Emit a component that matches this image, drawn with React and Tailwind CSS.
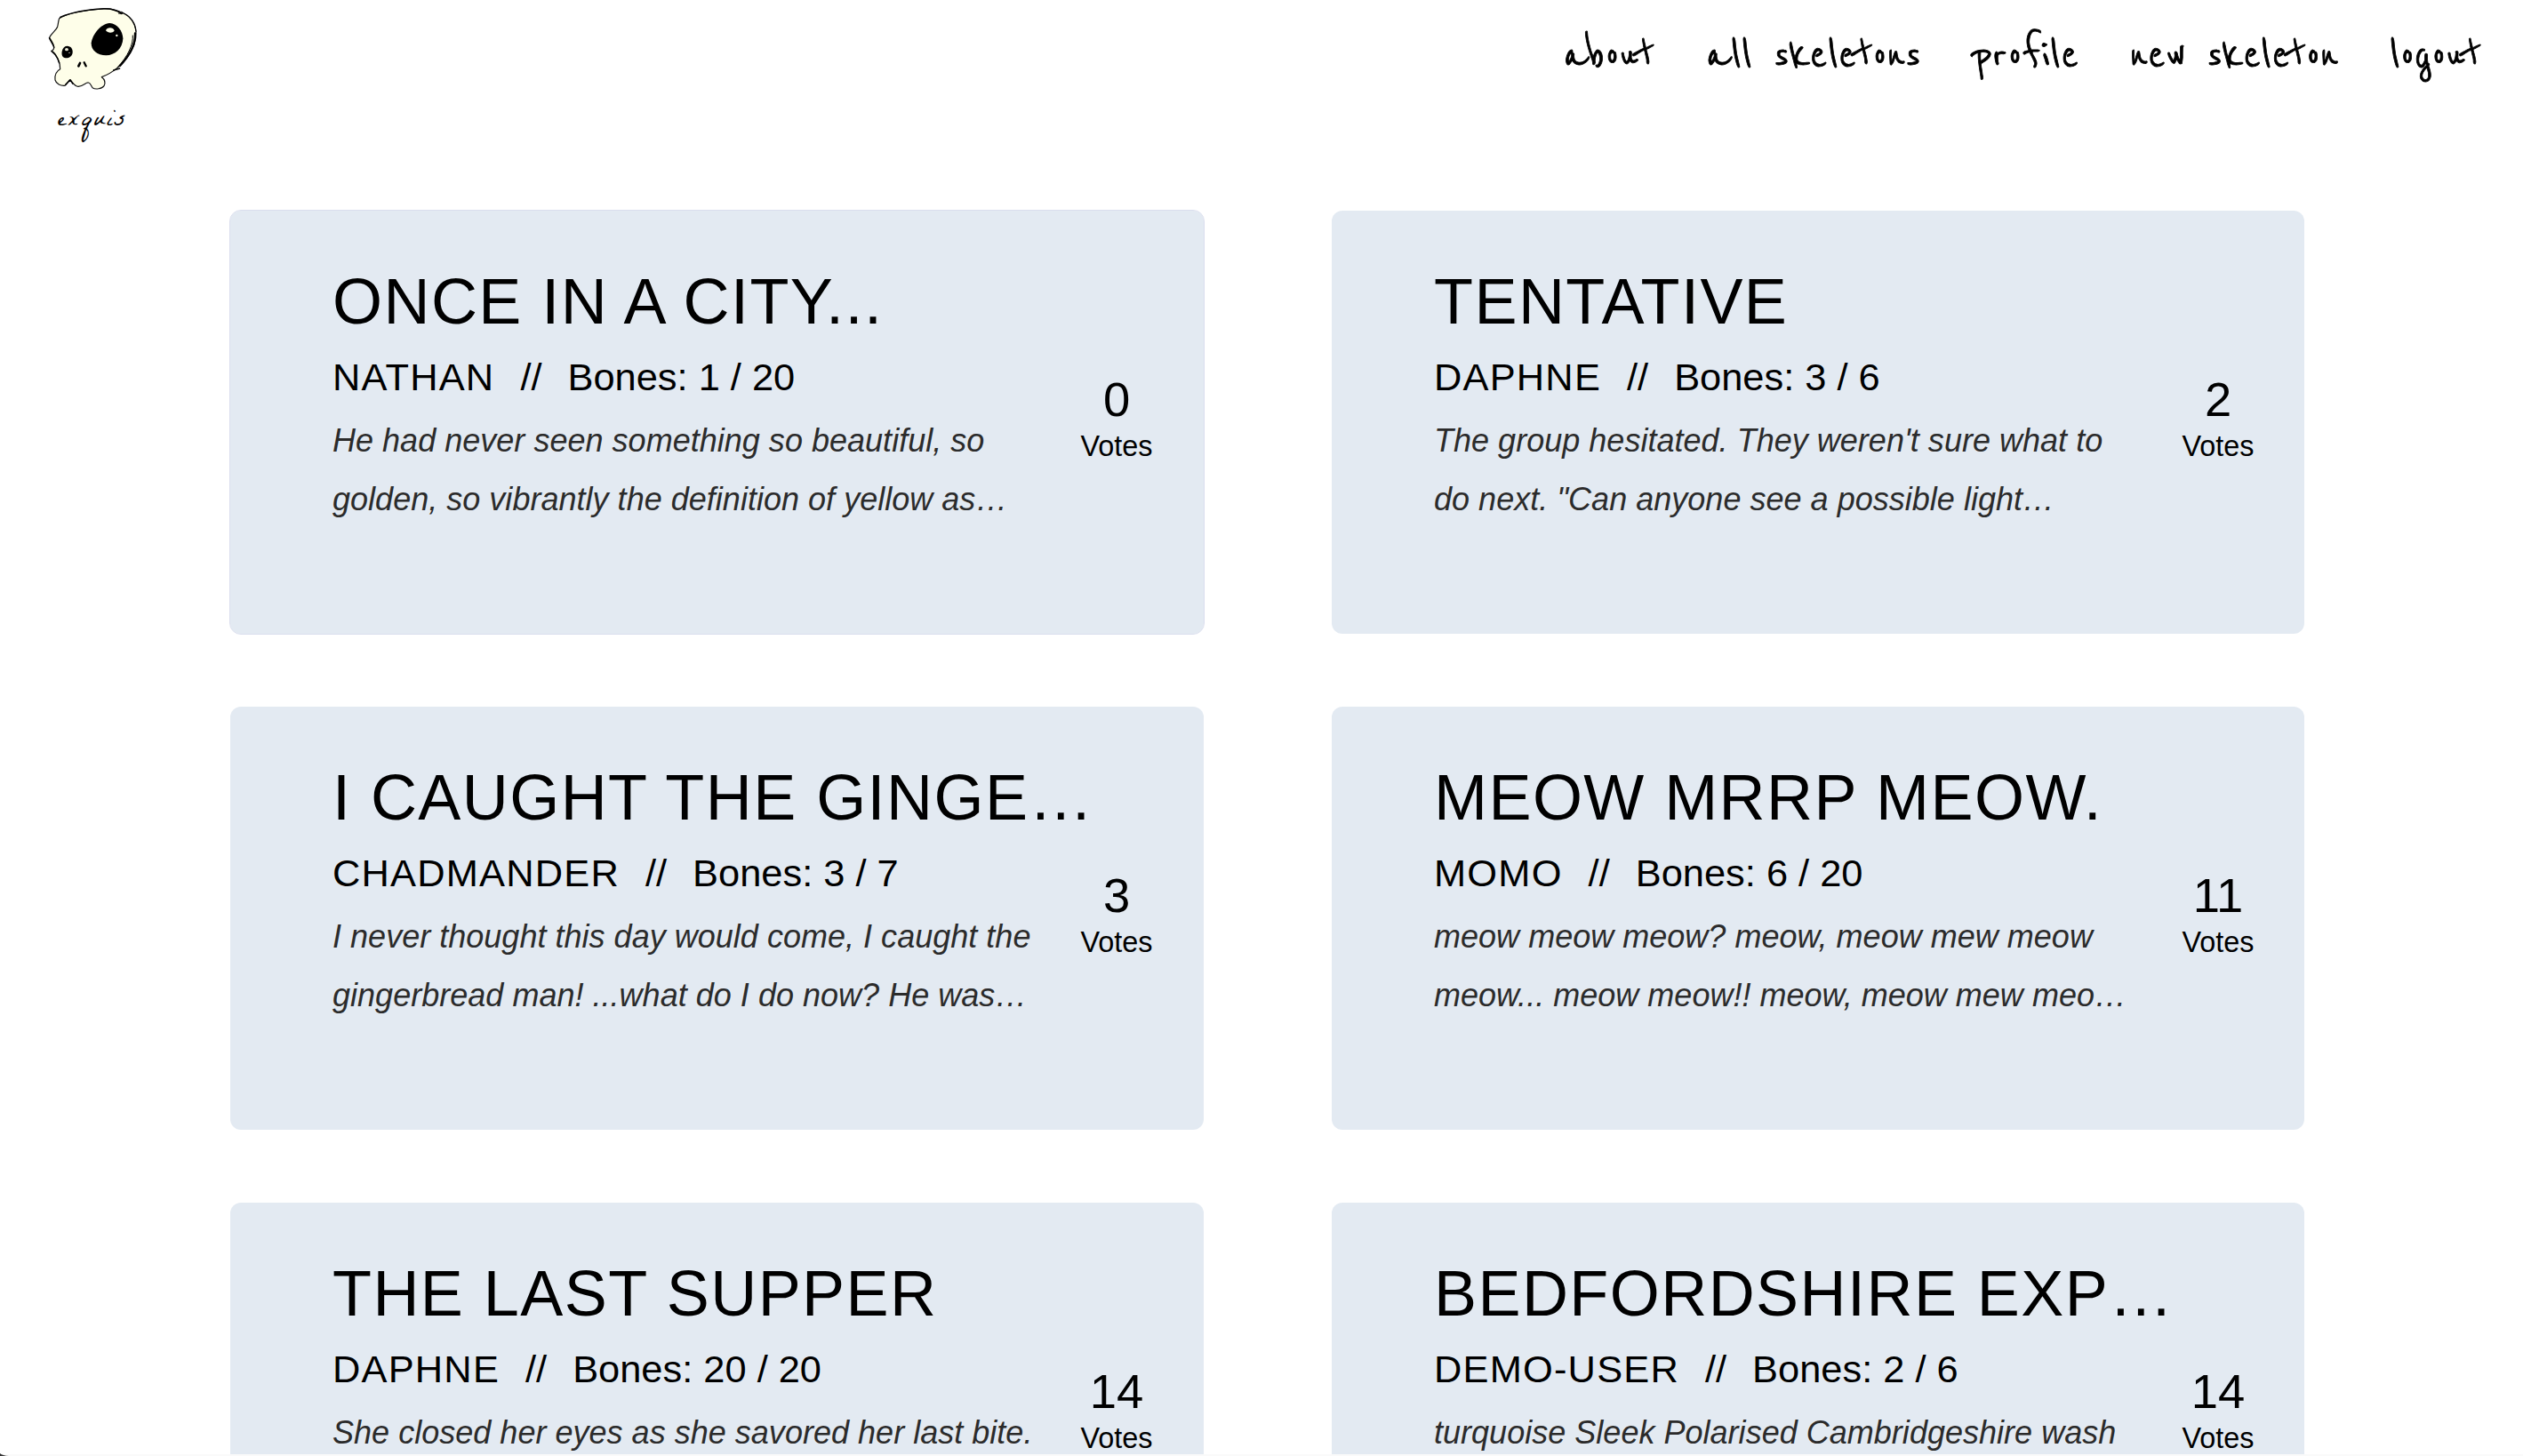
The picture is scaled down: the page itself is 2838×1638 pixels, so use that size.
import React from "react";

const navItems = ["about", "all skeletons", "profile", "new skeleton", "logout"];

const skeletons = [
  {
    title: "ONCE IN A CITY...",
    author: "NATHAN",
    bones: "1 / 20",
    lines: ["He had never seen something so beautiful, so", "golden, so vibrantly the definition of yellow as…"],
    votes: 0,
    active: true,
  },
  {
    title: "TENTATIVE",
    author: "DAPHNE",
    bones: "3 / 6",
    lines: ["The group hesitated. They weren't sure what to", 'do next. "Can anyone see a possible light…'],
    votes: 2,
  },
  {
    title: "I CAUGHT THE GINGE…",
    author: "CHADMANDER",
    bones: "3 / 7",
    lines: ["I never thought this day would come, I caught the", "gingerbread man! ...what do I do now? He was…"],
    votes: 3,
  },
  {
    title: "MEOW MRRP MEOW.",
    author: "MOMO",
    bones: "6 / 20",
    lines: ["meow meow meow? meow, meow mew meow", "meow... meow meow!! meow, meow mew meo…"],
    votes: 11,
  },
  {
    title: "THE LAST SUPPER",
    author: "DAPHNE",
    bones: "20 / 20",
    lines: ["She closed her eyes as she savored her last bite."],
    votes: 14,
  },
  {
    title: "BEDFORDSHIRE EXP…",
    author: "DEMO-USER",
    bones: "2 / 6",
    lines: ["turquoise Sleek Polarised Cambridgeshire wash"],
    votes: 14,
  },
];

function Skull() {
  return (
    <svg viewBox="150 21 330 285" className="h-[95px] w-[110px]" fill="none" strokeLinecap="round" strokeLinejoin="round">
      <path
        d="M200 62 C226 45 290 34 350 30 C382 28 402 38 421 47 C441 56 457 78 459 106 C461 140 447 172 427 197 C409 218 385 245 343 260 C354 268 357 278 351 290 C344 300 322 303 312 296 C306 287 305 280 299 279 C289 277 284 290 264 292 C252 291 244 277 237 269 C230 270 227 286 218 289 C205 290 190 284 186 270 C184 254 190 240 203 233 C203 214 196 190 174 173 C180 168 184 164 182 158 C176 146 170 138 166 128 C172 114 190 102 194 90 C197 80 196 72 200 62 Z"
        fill="#fefee9"
        stroke="#111"
        strokeWidth="3.5"
      />
      <path d="M203 58 C240 42 300 32 350 29 C378 28 396 36 410 46" stroke="#000" strokeWidth="4.5" />
      <path d="M400 45 L413 46 M410 40 C436 52 456 76 459 106" stroke="#000" strokeWidth="3" />
      <path d="M456 112 C458 150 440 184 405 222" stroke="#000" strokeWidth="7" />
      <path d="M448 120 C450 150 432 190 396 228" stroke="#000" strokeWidth="3" />
      <path d="M383 237 L404 231" stroke="#000" strokeWidth="4" />
      <path d="M167 128 C176 142 182 152 182 160 M174 172 C184 176 194 194 200 212" stroke="#000" strokeWidth="4.5" />
      <path d="M221 286 L237 270 L246 283" stroke="#000" strokeWidth="4.5" />
      <path
        d="M370 78 C396 80 414 104 415 130 C414 164 388 187 358 187 C328 187 307 170 308 145 C312 116 340 80 370 78 Z"
        fill="#000"
      />
      <path d="M357 103 C360 92 382 90 386 104 C380 112 364 112 357 103 Z" fill="#fefee9" />
      <circle cx="394" cy="120" r="3.5" fill="#fefee9" />
      <path d="M226 155 C240 155 246 166 245 178 C243 191 232 197 221 196 C211 195 207 186 209 174 C211 163 217 156 226 155 Z" fill="#000" />
      <ellipse cx="225" cy="167" rx="6" ry="5" fill="#e9e9d6" />
      <circle cx="234" cy="178" r="2" fill="#fefee9" />
      <path d="M270 213 L265 223" stroke="#000" strokeWidth="8" />
      <path d="M284 211 L290 223" stroke="#000" strokeWidth="7" />
    </svg>
  );
}

function Header() {
  return (
    <header className="flex h-[180px] items-start justify-between pr-[47px]">
      <a className="ml-[45px] flex w-[120px] flex-col items-center pt-[7px]">
        <Skull />
        <span className="mt-[9px] mr-0.5 text-[27px] leading-[52px] tracking-[1.8px] font-['La_Belle_Aurore','Cedarville_Cursive',cursive]">exquis</span>
      </a>
      <nav className="mt-[33px] flex gap-[57.6px] text-[57.6px] leading-[60px] font-bold [-webkit-text-stroke:0.8px_black] font-['Reenie_Beanie',Lato,cursive]">
        {navItems.map((item) => (
          <a key={item} className="whitespace-nowrap">
            {item}
          </a>
        ))}
      </nav>
    </header>
  );
}

function Card({ title, author, bones, lines, votes, active }) {
  return (
    <article
      className={`flex h-[476px] rounded-xl bg-[#e3eaf2] pl-[115px] ${
        active ? "outline outline-1 outline-[#dadeee]" : ""
      }`}
    >
      <div className="w-[842px] shrink-0 whitespace-nowrap pt-[62px]">
        <h2 className="text-[72px] leading-[80px] tracking-[1.44px]">{title}</h2>
        <div className="mt-[19px] flex gap-[29px] text-[43.4px] leading-[52px]">
          <span className="tracking-[1.2px]">{author}</span>
          <span>//</span>
          <span>Bones: {bones}</span>
        </div>
        <div className="mt-[13px] text-[36px] leading-[66px] tracking-[0.02px] text-[#2b2b2b] italic">
          {lines.map((line) => (
            <p key={line}>{line}</p>
          ))}
        </div>
      </div>
      <div className="flex w-20 shrink-0 flex-col items-center pt-[185px]">
        <span className="text-[54.4px] leading-[56px]">{votes}</span>
        <span className="mt-1.5 text-[32.4px] leading-9">Votes</span>
      </div>
    </article>
  );
}

export default function App() {
  return (
    <div className="relative flex h-[1638px] w-[2838px] flex-col overflow-hidden bg-white text-black font-['Liberation_Sans',Arial,sans-serif]">
      <div className="h-[1636px] overflow-hidden">
        <Header />
        <main className="mt-[57px] ml-[259px] grid grid-cols-[1095px_1094px] gap-x-[144px] gap-y-[82px]">
          {skeletons.map((s) => (
            <Card key={s.title} {...s} />
          ))}
        </main>
      </div>
      <div className="h-0.5 bg-[#fafafa]" />
      <svg viewBox="0 0 10 3" className="absolute bottom-0 left-0 h-[3px] w-2.5">
        <path d="M0 0 Q3 2.5 10 3 H0 Z" fill="#333" />
      </svg>
    </div>
  );
}
